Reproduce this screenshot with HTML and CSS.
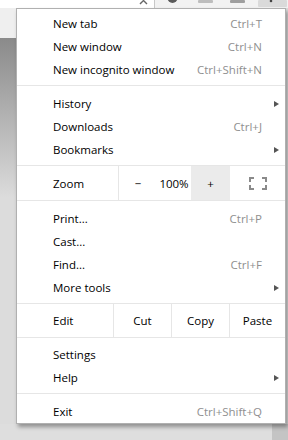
FILE: index.html
```html
<!DOCTYPE html>
<html lang="en">
<head>
  <meta charset="UTF-8">
  <meta name="viewport" content="width=device-width, initial-scale=1.0">
  <title>Browser menu</title>
  <link rel="stylesheet" href="styles.css">
</head>
<body>
  <div class="toolbar">
    <svg width="288" height="8" viewBox="0 0 288 8">
      <rect x="0" y="0" width="154" height="8" fill="#ffffff"/>
      <rect x="154" y="0" width="134" height="8" fill="#f2f2f2"/>
      <line x1="154.5" y1="0" x2="154.5" y2="8" stroke="#c8c8c8"/>
      <path d="M140 -3 L147 4 M147 -3 L140 4" stroke="#666" stroke-width="1.4"/>
      <circle cx="172.5" cy="-2" r="5" fill="#5a5a5a"/>
      <rect x="198" y="0" width="15" height="3" rx="1" fill="#bdbdbd"/>
      <rect x="230" y="0" width="15" height="3" rx="1" fill="#9e9e9e"/>
      <rect x="258" y="0" width="29" height="7" rx="1" fill="#dadada"/>
      <circle cx="271" cy="1" r="1.3" fill="#444"/>
    </svg>
  </div>

  <div class="main">
    <div class="side"></div>

    <div class="menu">
      <div class="group first">
        <div class="item"><span>New tab</span><span class="key">Ctrl+T</span></div>
        <div class="item"><span>New window</span><span class="key">Ctrl+N</span></div>
        <div class="item"><span>New incognito window</span><span class="key">Ctrl+Shift+N</span></div>
      </div>

      <div class="group">
        <div class="item"><span>History</span><span class="arrow"></span></div>
        <div class="item"><span>Downloads</span><span class="key">Ctrl+J</span></div>
        <div class="item"><span>Bookmarks</span><span class="arrow"></span></div>
      </div>

      <div class="zoom-row">
        <span class="label">Zoom</span>
        <span class="cell minus">&minus;</span>
        <span class="cell percent">100%</span>
        <span class="cell plus">+</span>
        <span class="cell full">
          <svg width="18" height="13" viewBox="0 0 18 13">
            <path d="M1 5 V1 H5 M13 1 H17 V5 M17 8 V12 H13 M5 12 H1 V8" fill="none" stroke="#8a8a8a" stroke-width="2"/>
          </svg>
        </span>
      </div>

      <div class="group">
        <div class="item"><span>Print...</span><span class="key">Ctrl+P</span></div>
        <div class="item"><span>Cast...</span></div>
        <div class="item"><span>Find...</span><span class="key">Ctrl+F</span></div>
        <div class="item"><span>More tools</span><span class="arrow"></span></div>
      </div>

      <div class="edit-row">
        <span class="label">Edit</span>
        <span class="cell">Cut</span>
        <span class="cell">Copy</span>
        <span class="cell">Paste</span>
      </div>

      <div class="group settings">
        <div class="item"><span>Settings</span></div>
        <div class="item"><span>Help</span><span class="arrow"></span></div>
      </div>

      <div class="group last">
        <div class="item"><span>Exit</span><span class="key">Ctrl+Shift+Q</span></div>
      </div>
    </div>
  </div>

  <div class="bottom">
    <div class="scroll"></div>
  </div>
</body>
</html>
```

FILE: styles.css
```css
body {
  margin: 0;
  width: 288px;
  height: 440px;
  overflow: hidden;
  background-color: #dedede;
  font-family: "Open Sans", "Noto Sans", sans-serif;
  font-size: 11.5px;
  color: #000;
}

.toolbar {
  height: 8px;
  line-height: 0;
}

.main {
  display: flex;
}

.side {
  width: 16px;
  background: linear-gradient(#efefef 0, #efefef 30px, #8a8a8a 30px, #dcdcdc 190px, #dcdcdc 100%);
}

.menu {
  width: 270px;
  box-sizing: border-box;
  background-color: #fff;
  border: 1px solid #b0b0b0;
  box-shadow: 2px 3px 4px rgba(0, 0, 0, 0.35);
  position: relative;
  z-index: 1;
}

.group {
  padding: 6px 0 4px;
  border-bottom: 1px solid #e6e6e6;
}

.group.first {
  padding-top: 3px;
}

.group.settings {
  padding-top: 5px;
}

.group.last {
  padding-bottom: 0;
  border-bottom: none;
}

.item {
  display: flex;
  align-items: center;
  height: 23px;
  padding: 0 6px 0 36px;
}

.item .key {
  margin-left: auto;
  margin-right: 17px;
  color: #8f8f8f;
}

.arrow {
  margin-left: auto;
  width: 0;
  height: 0;
  border-left: 5px solid #555;
  border-top: 3.5px solid transparent;
  border-bottom: 3.5px solid transparent;
}

.zoom-row,
.edit-row {
  display: flex;
  height: 34px;
  border-bottom: 1px solid #e6e6e6;
}

.edit-row {
  height: 33px;
}

.zoom-row .label,
.edit-row .label {
  display: flex;
  align-items: center;
  padding-left: 36px;
  box-sizing: border-box;
}

.zoom-row .label {
  width: 102px;
  border-right: 1px solid #e6e6e6;
}

.zoom-row .cell,
.edit-row .cell {
  display: flex;
  align-items: center;
  justify-content: center;
  box-sizing: border-box;
}

.zoom-row .minus {
  width: 38px;
}

.zoom-row .percent {
  width: 34px;
}

.zoom-row .plus {
  width: 39px;
  background-color: #ebebeb;
}

.zoom-row .full {
  flex: 1;
}

.edit-row .label {
  width: 96px;
}

.edit-row .cell {
  width: 58px;
  border-left: 1px solid #e6e6e6;
}

.edit-row .cell:last-child {
  flex: 1;
}

.bottom {
  height: 16px;
  display: flex;
  justify-content: flex-end;
}

.scroll {
  width: 16px;
  background-color: #c4c4c4;
}
```
